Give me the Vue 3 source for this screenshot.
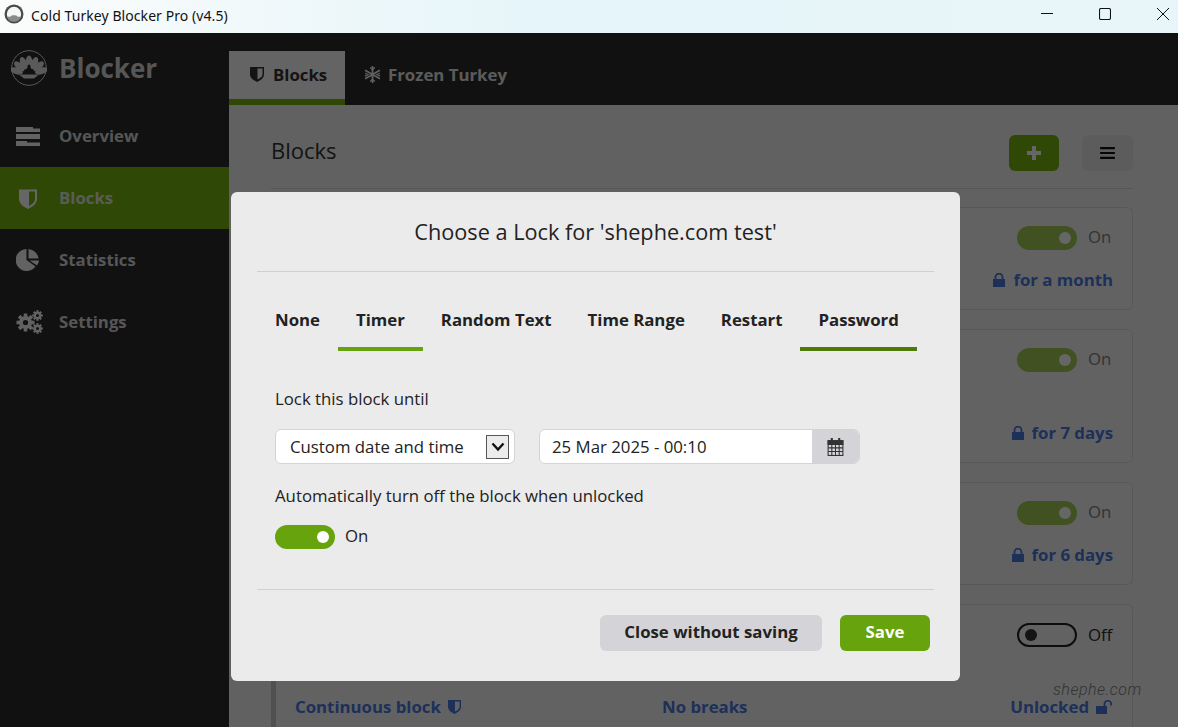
<script setup>
const navItems = [
  { key: 'overview', label: 'Overview' },
  { key: 'blocks', label: 'Blocks', active: true },
  { key: 'statistics', label: 'Statistics' },
  { key: 'settings', label: 'Settings' },
]
const cards = [
  { cls: 'c1', on: true, lock: 'for a month' },
  { cls: 'c2', on: true, lock: 'for 7 days' },
  { cls: 'c3', on: true, lock: 'for 6 days' },
]
const lockTabs = [
  { label: 'None' },
  { label: 'Timer', cls: 'sel' },
  { label: 'Random Text' },
  { label: 'Time Range' },
  { label: 'Restart' },
  { label: 'Password', cls: 'pw' },
]
const gearA = Array.from({ length: 8 }, (_, i) => i * 45)
const feathers = [-72, -48, -24, 0, 24, 48, 72]
</script>

<template>
  <div class="win">
    <header class="titlebar">
      <svg class="app-ico" viewBox="0 0 20 20" width="20" height="20">
        <circle cx="10" cy="10" r="9.500" fill="#4a4a4a" />
        <circle cx="10" cy="10" r="7.200" fill="#f6f6f6" />
        <path d="M3.200 12.500a7 7 0 0 0 13.600 0c-1.500-.5-2.500 1-3.300 0-.8-1-2-1.200-3.500-1.200s-2.700.2-3.500 1.200c-.8 1-1.800-.5-3.300 0z" fill="#8a8a8a" />
      </svg>
      <span class="app-title">Cold Turkey Blocker Pro (v4.5)</span>
      <div class="controls">
        <svg width="12" height="12" viewBox="0 0 12 12"><path d="M0 5.500h12" stroke="#111" stroke-width="1" /></svg>
        <svg width="12" height="12" viewBox="0 0 12 12"><rect x=".5" y=".5" width="11" height="11" rx="1.500" fill="none" stroke="#111" stroke-width="1.100" /></svg>
        <svg width="12" height="12" viewBox="0 0 12 12"><path d="M0 0l12 12M12 0L0 12" stroke="#111" stroke-width="1" /></svg>
      </div>
    </header>

    <div class="body">
      <aside class="side">
        <div class="brand">
          <svg class="logo" viewBox="0 0 36 36" width="36" height="36">
            <circle cx="18" cy="18" r="17.300" fill="none" stroke="#e0e0e0" stroke-width="1" />
            <g fill="#e0e0e0">
              <ellipse v-for="a in feathers" :key="a" cx="18" cy="12" rx="3.300" ry="6.500" :transform="`rotate(${a} 18 25)`" />
              <path d="M8 24.500h20l-5 4H13z" />
            </g>
            <path d="M16.500 24v-8a1.500 1.500 0 0 1 3 0v8z" fill="#2b2b2b" />
          </svg>
          <span class="brand-text">Blocker</span>
        </div>
        <nav class="nav">
          <div v-for="n in navItems" :key="n.key" class="nav-item" :class="{ active: n.active }">
            <span class="nav-ico">
              <svg v-if="n.key === 'overview'" viewBox="0 0 24 19" width="24" height="19" fill="#f4f4f4">
                <path d="M0 0h17v1.500h7V5H0zM0 7h24v5H0zM0 14h11v1.500h13V19H0z" />
              </svg>
              <svg v-else-if="n.key === 'blocks'" viewBox="0 0 18 21" width="18" height="21">
                <path d="M0 1.500h18v9c0 5-4 8-9 10.500-5-2.500-9-5.500-9-10.500z" fill="#fff" />
                <path d="M10 3.500h6v7c0 3.500-2.500 5.500-6 7.500z" fill="#76b50f" />
              </svg>
              <svg v-else-if="n.key === 'statistics'" viewBox="0 0 24 24" width="24" height="24" fill="#f4f4f4">
                <path d="M10.500 1a11 11 0 1 0 9 17.500L10.500 12z" />
                <path d="M12.500 1a11 11 0 0 1 10 9.500h-10z" />
                <path d="M13.500 12.500h9.500a11 11 0 0 1-2 5z" />
              </svg>
              <svg v-else viewBox="0 0 27 24" width="27" height="24" fill="#f4f4f4">
                <g transform="translate(9.500 12.500)">
                  <rect v-for="a in gearA" :key="a" x="-1.800" y="-9" width="3.600" height="4" :transform="`rotate(${a})`" />
                  <circle r="6.500" /><circle r="2.600" fill="#2b2b2b" />
                </g>
                <g transform="translate(21.500 5.500)">
                  <rect v-for="a in gearA" :key="a" x="-1.100" y="-5.300" width="2.200" height="2.500" :transform="`rotate(${a})`" />
                  <circle r="3.800" /><circle r="1.500" fill="#2b2b2b" />
                </g>
                <g transform="translate(21.500 18.500)">
                  <rect v-for="a in gearA" :key="a" x="-1.100" y="-5.300" width="2.200" height="2.500" :transform="`rotate(${a})`" />
                  <circle r="3.800" /><circle r="1.500" fill="#2b2b2b" />
                </g>
              </svg>
            </span>
            <span>{{ n.label }}</span>
          </div>
        </nav>
      </aside>

      <main class="main">
        <div class="tabs">
          <div class="tab active">
            <svg viewBox="0 0 14 16" width="14" height="16">
              <path d="M0 1h14v7c0 4-3 6-7 8-4-2-7-4-7-8z" fill="#333" />
              <path d="M7.500 2.500h5V8c0 2.500-2 4-5 5.500z" fill="#fafafa" />
            </svg>
            Blocks
          </div>
          <div class="tab">
            <svg viewBox="0 0 16 16" width="17" height="17" stroke="#f0f0f0" stroke-width="1.700" fill="none">
              <path d="M8 0v16M1 4l14 8M15 4L1 12" />
              <path d="M5.800 1.500L8 3.500l2.200-2M5.800 14.500L8 12.500l2.200 2M1 7l2.800 1L1 9.500M15 7l-2.800 1L15 9.500" stroke-width="1.200" />
            </svg>
            Frozen Turkey
          </div>
        </div>

        <div class="content">
          <div class="head">
            <h1>Blocks</h1>
            <div class="head-btns">
              <button class="btn-add">
                <svg viewBox="0 0 14 14" width="14" height="14"><path d="M5 0h4v5h5v4H9v5H5V9H0V5h5z" fill="#fff" /></svg>
              </button>
              <button class="btn-menu">
                <svg viewBox="0 0 16 13" width="15" height="12"><path d="M0 0h16v2.400H0zM0 5.300h16v2.400H0zM0 10.600h16V13H0z" fill="#111" /></svg>
              </button>
            </div>
          </div>

          <section v-for="c in cards" :key="c.cls" class="card" :class="c.cls">
            <div class="row-on">
              <span class="sw on"><i /></span><span class="sw-label">On</span>
            </div>
            <div class="row-lock">
              <svg viewBox="0 0 12 14" width="12" height="14" fill="#4a78e0">
                <path d="M0 6h12v8H0z" /><path d="M2.500 6V4a3.500 3.500 0 0 1 7 0v2" fill="none" stroke="#4a78e0" stroke-width="1.800" />
              </svg>
              <b>{{ c.lock }}</b>
            </div>
          </section>

          <section class="card c4">
            <div class="row-on">
              <span class="sw off"><i /></span><span class="sw-label dark">Off</span>
            </div>
            <div class="row-last">
              <b class="cont">Continuous block
                <svg viewBox="0 0 14 16" width="13" height="15">
                  <path d="M0 1h14v7c0 4-3 6-7 8-4-2-7-4-7-8z" fill="#4a78e0" />
                  <path d="M7.500 2.500h5V8c0 2.500-2 4-5 5.500z" fill="#f5f5f5" />
                </svg>
              </b>
              <b class="nobreak">No breaks</b>
              <b class="unlocked">Unlocked
                <svg viewBox="0 0 17 14" width="17" height="14" fill="#4a78e0">
                  <path d="M0 6h11v8H0z" /><path d="M8.500 6V4a3.300 3.300 0 0 1 6.600 0v1.500" fill="none" stroke="#4a78e0" stroke-width="1.800" />
                </svg>
              </b>
            </div>
          </section>
        </div>
      </main>

      <div class="overlay"></div>

      <div class="dialog">
        <h2>Choose a Lock for 'shephe.com test'</h2>
        <div class="lock-tabs">
          <div v-for="t in lockTabs" :key="t.label" class="lock-tab" :class="t.cls">{{ t.label }}</div>
        </div>
        <div class="form">
          <p class="lbl">Lock this block until</p>
          <div class="inputs">
            <div class="select">
              <span>Custom date and time</span>
              <span class="chev">
                <svg viewBox="0 0 14 10" width="14" height="10"><path d="M1.500 1.500L7 7.500l5.500-6" fill="none" stroke="#111" stroke-width="2.400" /></svg>
              </span>
            </div>
            <div class="date">
              <span class="date-val">25 Mar 2025 - 00:10</span>
              <span class="date-btn">
                <svg viewBox="0 0 16 18" width="17" height="19" fill="none" stroke="#333" stroke-width="1">
                  <rect x="1" y="3.500" width="14" height="14" />
                  <path d="M1 3.500h14V7H1z" fill="#333" />
                  <path d="M1 10.300h14M1 13.800h14M4.500 7v10.500M8 7v10.500M11.500 7v10.500" />
                  <path d="M4.500 1v3.500M11.500 1v3.500" stroke-width="2" />
                </svg>
              </span>
            </div>
          </div>
          <p class="lbl auto">Automatically turn off the block when unlocked</p>
          <div class="auto-row">
            <span class="sw2"><i /></span><span class="auto-on">On</span>
          </div>
        </div>
        <div class="actions">
          <button class="close">Close without saving</button>
          <button class="save">Save</button>
        </div>
      </div>
    </div>

    <div class="mark">shephe.com</div>
  </div>
</template>

<style>
html, body { margin: 0; background: #111; overflow: hidden; }
</style>

<style scoped>
* { box-sizing: border-box; }
.win {
  width: 1178px; height: 727px; overflow: hidden; position: relative;
  font-family: "Open Sans", "Noto Sans", sans-serif; display: flex; flex-direction: column;
}
.titlebar {
  height: 33px; flex: none; display: flex; align-items: center; padding: 0 0 3px 4px;
  background: linear-gradient(90deg, #fbfcfc 0%, #e6f5f9 45%, #e8f5f9 100%);
}
.app-ico { margin-right: 7px; margin-bottom: 2px; }
.app-title { font-family: "Noto Sans", sans-serif; font-size: 14px; letter-spacing: .07px; color: #111; }
.controls { margin-left: auto; display: flex; gap: 46px; padding: 0 9px 2px 0; align-items: center; }

.body { flex: 1; display: flex; position: relative; min-height: 0; }
.side { width: 229px; flex: none; background: #2b2b2b; }
.brand { height: 72px; display: flex; align-items: center; padding-left: 11px; gap: 12px; padding-bottom: 3px; }
.brand-text { font-size: 26px; font-weight: 700; color: #d8d8d8; }
.nav { display: flex; flex-direction: column; }
.nav-item {
  height: 62px; display: flex; align-items: center; font-size: 16.800px; font-weight: 700; color: #d8d8d8; padding-bottom: 2px;
}
.nav-item.active { background: #76b50f; color: #dfe8d6; }
.nav-ico { width: 59px; padding-left: 16px; display: flex; align-items: center; padding-top: 2px; }
.nav-item.active .nav-ico { padding-left: 19px; }

.main { flex: 1; min-width: 0; display: flex; flex-direction: column; background: #f2f2f2; }
.tabs { height: 72px; flex: none; background: #2b2b2b; padding-top: 18px; display: flex; }
.tab {
  height: 54px; display: flex; align-items: center; gap: 7px; padding: 0 19px 8px 19px;
  font-size: 16.800px; font-weight: 700; color: #e4e4e4;
}
.tab.active { width: 116px; padding: 0 0 2px 21px; gap: 9px; background: #fafafa; color: #333; border-bottom: 6px solid #76b50f; }

.content { flex: 1; padding: 0 45px 0 42px; }
.head {
  height: 84px; display: flex; align-items: center; justify-content: space-between;
  border-bottom: 1px solid #d8d8d8; padding-top: 6px;
}
.head h1 { margin: 0; font-size: 22px; font-weight: 400; color: #333; }
.head-btns { display: flex; gap: 23px; padding-top: 6px; }
.head-btns button {
  width: 50px; height: 36px; border: 0; border-radius: 6px; display: flex; align-items: center; justify-content: center; padding: 0;
}
.btn-add { background: #76b50f; }
.btn-menu { background: #e6e6e6; width: 51px !important; }

.card {
  background: #f5f5f5; border: 1px solid #dcdcdc; border-left: 5px solid #c8c8c8; border-radius: 6px; position: relative;
  margin-top: 19px; padding: 0 19px 0 0; display: flex; flex-direction: column; align-items: flex-end;
}
.c1 { height: 103px; margin-top: 18px; }
.c2 { height: 134px; }
.c3 { height: 103px; }
.c4 { height: 140px; }
.row-on { display: flex; align-items: center; gap: 11px; height: 24px; margin-top: 18px; width: 96px; font-size: 16.800px; }
.sw { width: 60px; height: 24px; border-radius: 12px; flex: none; display: flex; align-items: center; justify-content: flex-end; padding: 0 6px; }
.sw i { width: 12px; height: 12px; border-radius: 50%; background: #fff; display: block; }
.sw.on { background: #a2ca55; }
.sw.off { border: 2px solid #222; background: #f5f5f5; justify-content: flex-start; padding: 0 6px; }
.sw.off i { background: #333; }
.sw-label { color: #808080; padding-bottom: 3px; }
.sw-label.dark { color: #2c2c2c; padding-bottom: 2px; }
.row-lock { margin-top: auto; margin-bottom: 18px; display: flex; align-items: center; gap: 8px; font-size: 16.800px; color: #4a78e0; }
.row-lock svg { flex: none; }
.row-last {
  position: absolute; left: 19px; right: 19px; top: 90px; display: flex; font-size: 16.800px; color: #4a78e0;
}
.row-last b { display: flex; align-items: center; gap: 7px; }
.nobreak { position: absolute; left: 367px; }
.unlocked { margin-left: auto; }

.overlay { position: absolute; inset: 0; background: rgba(0, 0, 0, .6); }

.dialog {
  position: absolute; left: 231px; top: 159px; width: 729px; height: 489px;
  background: #ebebeb; border-radius: 6px; display: flex; flex-direction: column; padding: 0 26px;
}
.dialog h2 {
  margin: 0; height: 80px; flex: none; border-bottom: 1px solid #d0d0d0; display: flex; align-items: center; justify-content: center;
  font-size: 21.700px; font-weight: 400; color: #222;
}
.lock-tabs { display: flex; margin-top: 25px; height: 54px; flex: none; }
.lock-tab {
  padding: 0 18px 6px; height: 54px; font-size: 16.800px; font-weight: 700; color: #222; display: flex; align-items: center;
  border-bottom: 4px solid transparent; white-space: nowrap;
}
.lock-tab.sel { border-bottom-color: #66a30c; }
.lock-tab.pw { border-bottom-color: #4d7a08; }
.form { flex: 1; padding: 0 18px; min-height: 0; }
.lbl { margin: 0; font-size: 16.800px; color: #222; line-height: 22px; }
.form > .lbl:first-child { margin-top: 37px; }
.inputs { display: flex; gap: 24px; margin-top: 19px; }
.select {
  width: 240px; height: 35px; background: #fff; border: 1px solid #d4d4d8; border-radius: 6px; display: flex; align-items: center;
  padding-left: 14px; font-size: 16.800px; color: #222; justify-content: space-between; padding-right: 5px;
}
.chev { width: 23px; height: 24px; border: 1px solid #555; background: #ececec; display: flex; align-items: center; justify-content: center; }
.date { width: 321px; height: 35px; display: flex; border: 1px solid #d4d4d8; border-radius: 6px; overflow: hidden; background: #fff; }
.date-val { flex: 1; display: flex; align-items: center; padding-left: 12px; font-size: 16.800px; color: #222; }
.date-btn { width: 47px; background: #d4d4d8; display: flex; align-items: center; justify-content: center; }
.lbl.auto { margin-top: 21px; }
.auto-row { display: flex; align-items: center; gap: 10px; margin-top: 17px; font-size: 16.800px; color: #222; }
.auto-on { padding-bottom: 3px; }
.sw2 { width: 60px; height: 24px; border-radius: 12px; background: #66a30c; display: flex; align-items: center; justify-content: flex-end; padding: 0 6px; }
.sw2 i { width: 12px; height: 12px; border-radius: 50%; background: #fff; display: block; }

.actions {
  height: 92px; flex: none; border-top: 1px solid #d0d0d0; display: flex; justify-content: flex-end; align-items: flex-start; gap: 18px; padding: 25px 4px 0 0;
}
.actions button {
  height: 36px; border: 0; border-radius: 6px; font: 700 16.800px "Open Sans", "Noto Sans", sans-serif; padding: 0 0 3px;
}
.close { width: 222px; background: #d4d4d8; color: #222; }
.save { width: 90px; background: #66a30c; color: #fff; }

.mark {
  position: absolute; left: 1053px; top: 682px; font: italic 300 16px/15px Roboto, sans-serif; letter-spacing: .5px; color: #333;
}
</style>
